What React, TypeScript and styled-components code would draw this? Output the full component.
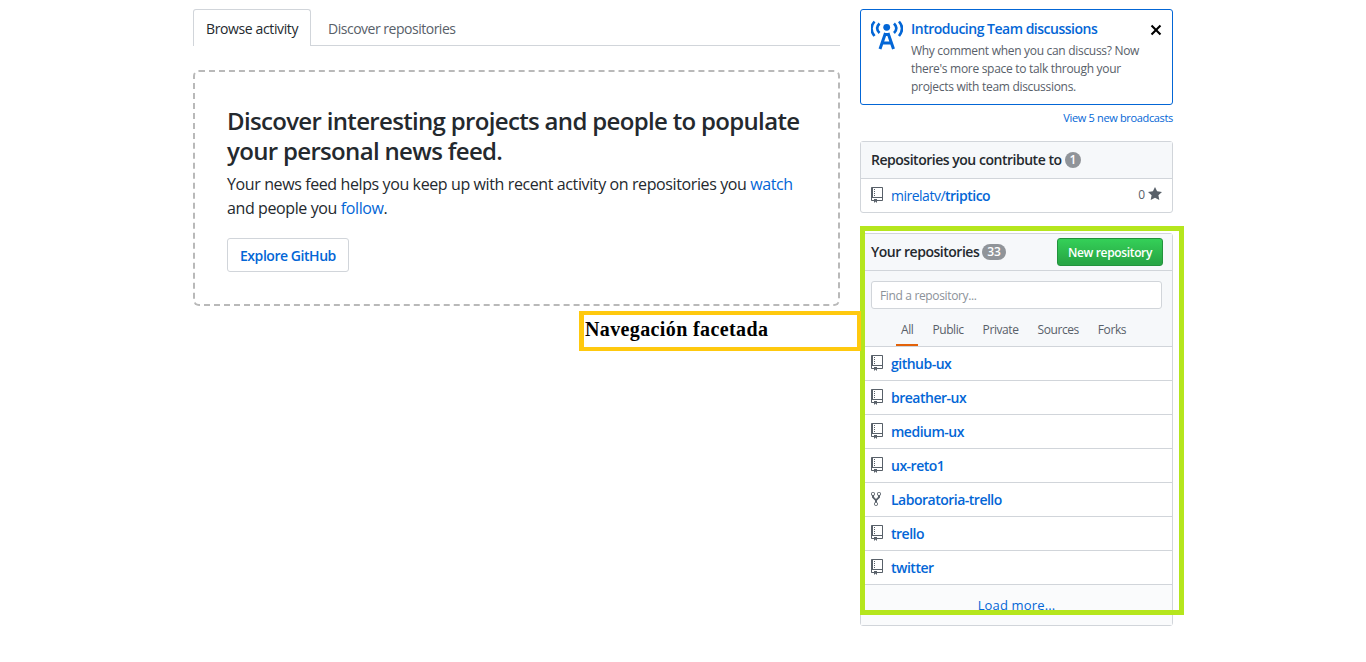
import React from "react";
import styled, { createGlobalStyle } from "styled-components";

const GlobalStyle = createGlobalStyle`
  html, body {
    margin: 0;
    padding: 0;
    background: #fff;
    font-family: "Open Sans", "Noto Sans", sans-serif;
    color: #24292e;
  }
  a {
    color: #0366d6;
    text-decoration: none;
  }
`;

//#region Styles
const Page = styled.div`
  position: relative;
  height: 662px;
  overflow: hidden;
`;

const Container = styled.div`
  width: 980px;
  margin: 0 auto;
  padding-top: 9px;
  display: grid;
  grid-template-columns: 647px 313px;
  column-gap: 20px;
  align-items: start;
`;

const TabBar = styled.div`
  display: flex;
  height: 36px;
  border-bottom: 1px solid #d1d5da;
  margin-bottom: 24px;
`;

const Tab = styled.a<{ $active?: boolean }>`
  box-sizing: border-box;
  height: 37px;
  display: flex;
  align-items: center;
  padding: 0 ${(p) => (p.$active ? "12px" : "16px")};
  font-size: 14px;
  letter-spacing: ${(p) => (p.$active ? "-0.38px" : "-0.49px")};
  color: ${(p) => (p.$active ? "#24292e" : "#586069")};
  background: ${(p) => (p.$active ? "#fff" : "transparent")};
  border: 1px solid ${(p) => (p.$active ? "#d1d5da" : "transparent")};
  border-bottom: 0;
  border-radius: 3px 3px 0 0;
`;

const Blankslate = styled.div`
  box-sizing: border-box;
  height: 236px;
  border: 2px dashed #b9b9b9;
  border-radius: 6px;
  padding: 34px 32px;
`;

const BlankTitle = styled.h2`
  margin: 0 0 6px;
  font-size: 24px;
  line-height: 30px;
  font-weight: 600;
  color: #24292e;
  letter-spacing: -0.67px;
`;

const BlankText = styled.p`
  margin: 0 0 18px;
  font-size: 16px;
  line-height: 24px;
  color: #24292e;
  letter-spacing: -0.39px;
`;

const ExploreButton = styled.a`
  box-sizing: border-box;
  display: inline-flex;
  align-items: center;
  height: 34px;
  padding: 0 12px;
  font-size: 14px;
  font-weight: 600;
  letter-spacing: -0.45px;
  border: 1px solid #d1d5da;
  border-radius: 3px;
`;

const Side = styled.div`
  display: flex;
  flex-direction: column;
`;

const Broadcast = styled.div`
  box-sizing: border-box;
  height: 96px;
  display: flex;
  gap: 8px;
  padding: 9px 10px;
  border: 1px solid #0366d6;
  border-radius: 3px;
  position: relative;
`;

const BroadcastBody = styled.div`
  flex: 1;
`;

const BroadcastTitle = styled.a`
  display: block;
  font-size: 14px;
  line-height: 20px;
  font-weight: 600;
  letter-spacing: -0.5px;
`;

const BroadcastText = styled.p`
  margin: 3px 0 0;
  font-size: 12px;
  line-height: 18px;
  color: #586069;
  letter-spacing: -0.3px;
  width: 240px;
`;

const BroadcastGlyph = styled.svg`
  flex: none;
  fill: none;
  stroke: #0366d6;
`;

const CloseIcon = styled.svg`
  position: absolute;
  top: 12px;
  right: 10px;
`;

const MoreLink = styled.a`
  align-self: flex-end;
  margin: 5px 0 15px;
  font-size: 11px;
  line-height: 16px;
  letter-spacing: -0.34px;
`;

const Card = styled.div<{ $gap?: boolean }>`
  border: 1px solid #d1d5da;
  border-radius: 3px;
  margin-bottom: ${(p) => (p.$gap ? "20px" : "0")};
`;

const CardHeader = styled.div<{ $height: number }>`
  box-sizing: border-box;
  height: ${(p) => p.$height}px;
  display: flex;
  align-items: center;
  justify-content: space-between;
  padding: 0 9px 0 10px;
  background: #f6f8fa;
  border-bottom: 1px solid #d1d5da;
`;

const CardTitle = styled.h3`
  margin: -1px 0 0;
  display: flex;
  align-items: center;
  gap: 3px;
  font-size: 14px;
  font-weight: 600;
  color: #24292e;
  letter-spacing: -0.48px;
`;

const Counter = styled.span`
  min-width: 6px;
  padding: 0 5px;
  height: 16px;
  display: inline-flex;
  align-items: center;
  justify-content: center;
  background: #909499;
  color: #fff;
  border-radius: 8px;
  font-size: 12px;
  font-weight: 600;
  letter-spacing: 0;
`;

const NewButton = styled.a`
  box-sizing: border-box;
  height: 28px;
  width: 106px;
  display: flex;
  align-items: center;
  justify-content: center;
  font-size: 12px;
  font-weight: 600;
  letter-spacing: -0.35px;
  color: #fff;
  background: linear-gradient(-180deg, #34d058, #28a745 90%);
  border: 1px solid #23923d;
  border-radius: 3px;
`;

const FilterPanel = styled.div`
  background: #f6f8fa;
  padding: 10px 10px 0;
  border-bottom: 1px solid #d1d5da;
`;

const FindInput = styled.input`
  box-sizing: border-box;
  display: block;
  width: 291px;
  height: 28px;
  padding: 1px 8px 0;
  font-family: inherit;
  font-size: 12px;
  letter-spacing: -0.35px;
  background: #fff;
  border: 1px solid #d1d5da;
  border-radius: 3px;
  &::placeholder {
    color: #8c9299;
    opacity: 1;
  }
`;

const FilterTabs = styled.div`
  display: flex;
  margin-top: 10px;
  padding-left: 25px;
`;

const FilterTab = styled.a<{ $active?: boolean }>`
  box-sizing: border-box;
  height: 27px;
  display: flex;
  align-items: center;
  padding: 0 5px 4px;
  margin-right: 9px;
  font-size: 12px;
  letter-spacing: -0.42px;
  color: #586069;
  border-bottom: 2px solid ${(p) => (p.$active ? "#e36209" : "transparent")};
`;

const RepoRow = styled.div<{ $height: number; $line?: boolean }>`
  box-sizing: border-box;
  height: ${(p) => p.$height}px;
  display: flex;
  align-items: center;
  gap: 8px;
  padding: 0 10px;
  border-bottom: ${(p) => (p.$line ? "1px solid #d1d5da" : "0")};
`;

const RepoIcon = styled.svg`
  flex: none;
  fill: #586069;
  margin-top: -1px;
`;

const RepoLink = styled.a`
  font-size: 14px;
  letter-spacing: -0.5px;
  font-weight: 600;
`;

const RepoOwner = styled.span`
  font-weight: 400;
`;

const Stars = styled.span`
  margin-left: auto;
  display: flex;
  align-items: center;
  gap: 3px;
  font-size: 12px;
  color: #586069;
  margin-top: -3px;
`;

const StarIcon = styled.svg`
  fill: #586069;
`;

const LoadMore = styled.a`
  display: block;
  box-sizing: border-box;
  height: 40px;
  padding-top: 10px;
  background: #fafbfc;
  text-align: center;
  font-size: 13px;
  line-height: 20px;
  letter-spacing: 0.15px;
`;

const Annotation = styled.div<{ $color: string; $w: number }>`
  position: absolute;
  box-sizing: border-box;
  border: ${(p) => p.$w}px solid ${(p) => p.$color};
`;

const GreenFrame = styled(Annotation)`
  left: 860px;
  top: 226px;
  width: 324px;
  height: 389px;
`;

const YellowLabel = styled(Annotation)`
  left: 579px;
  top: 311px;
  width: 282px;
  height: 40px;
  border-left-width: 5px;
  padding: 2px 0 0 1px;
  background: #fff;
  font-family: "Liberation Serif", serif;
  font-weight: 700;
  font-size: 20px;
  letter-spacing: 0.38px;
  line-height: 24px;
  color: #000;
`;
//#endregion

const TowerIcon = () => (
  <BroadcastGlyph width="32" height="32" viewBox="0 0 32 32">
    <circle cx="15.7" cy="8.3" r="3.4" fill="#0366d6" stroke="none" />
    <path d="M8.5 4.5C5.5 7.500 5.500 11 8.500 14M23 4.500C26 7.500 26 11 23 14" strokeWidth="2.600" />
    <path d="M3.500 2.500C-0.500 7 -0.500 12 3.500 17M28 2.500C32 7 32 12 28 17" strokeWidth="2.600" />
    <path d="M14.500 14L9 30M17 14L22.500 30M11.500 24H20M14 15.500H17.500" strokeWidth="3" />
  </BroadcastGlyph>
);

const BookIcon = () => (
  <RepoIcon width="12" height="16" viewBox="0 0 12 16">
    <path d="M4 9H3V8h1v1zm0-3H3v1h1V6zm0-2H3v1h1V4zm0-2H3v1h1V2zm8-1v12c0 .55-.45 1-1 1H6v2l-1.500-1.500L3 16v-2H1c-.55 0-1-.45-1-1V1c0-.55.45-1 1-1h10c.55 0 1 .45 1 1zm-1 10H1v2h2v-1h3v1h5v-2zm0-10H2v9h9V1z" />
  </RepoIcon>
);

const ForkIcon = () => (
  <RepoIcon width="12" height="16" viewBox="0 0 12 16">
    <path d="M8 1a1.993 1.993 0 0 0-1 3.720V6L5 8 3 6V4.720A1.993 1.993 0 0 0 2 1a1.993 1.993 0 0 0-1 3.720V6.500l3 3v1.780A1.993 1.993 0 0 0 5 15a1.993 1.993 0 0 0 1-3.720V9.500l3-3V4.720A1.993 1.993 0 0 0 8 1zM2 4.200C1.340 4.200.8 3.650.8 3c0-.65.55-1.200 1.200-1.200.65 0 1.200.55 1.200 1.200 0 .65-.55 1.200-1.200 1.200zm3 10c-.66 0-1.200-.55-1.200-1.200 0-.65.55-1.200 1.200-1.200.65 0 1.200.55 1.200 1.200 0 .65-.55 1.200-1.200 1.200zm3-10c-.66 0-1.200-.55-1.200-1.200 0-.65.55-1.200 1.200-1.200.65 0 1.200.55 1.200 1.200 0 .65-.55 1.200-1.200 1.200z" />
  </RepoIcon>
);

const repos = [
  { name: "github-ux" },
  { name: "breather-ux" },
  { name: "medium-ux" },
  { name: "ux-reto1" },
  { name: "Laboratoria-trello", fork: true },
  { name: "trello" },
  { name: "twitter" },
];

const filters = ["All", "Public", "Private", "Sources", "Forks"];

const App = () => {
  return (
    <Page>
      <GlobalStyle />
      <Container>
        <main>
          <TabBar>
            <Tab $active>Browse activity</Tab>
            <Tab>Discover repositories</Tab>
          </TabBar>
          <Blankslate>
            <BlankTitle>Discover interesting projects and people to populate your personal news feed.</BlankTitle>
            <BlankText>
              Your news feed helps you keep up with recent activity on repositories you <a>watch</a> and people you <a>follow</a>.
            </BlankText>
            <ExploreButton>Explore GitHub</ExploreButton>
          </Blankslate>
        </main>
        <Side>
          <Broadcast>
            <TowerIcon />
            <BroadcastBody>
              <BroadcastTitle>Introducing Team discussions</BroadcastTitle>
              <BroadcastText>Why comment when you can discuss? Now there's more space to talk through your projects with team discussions.</BroadcastText>
            </BroadcastBody>
            <CloseIcon width="12" height="16" viewBox="0 0 12 16">
              <path d="M7.480 8l3.750 3.750-1.480 1.480L6 9.480l-3.750 3.750-1.480-1.480L4.520 8 .77 4.250l1.480-1.480L6 6.520l3.750-3.750 1.480 1.480L7.480 8z" />
            </CloseIcon>
          </Broadcast>
          <MoreLink>View 5 new broadcasts</MoreLink>
          <Card $gap>
            <CardHeader $height={37}>
              <CardTitle>
                Repositories you contribute to <Counter>1</Counter>
              </CardTitle>
            </CardHeader>
            <RepoRow $height={33}>
              <BookIcon />
              <RepoLink>
                <RepoOwner>mirelatv/</RepoOwner>triptico
              </RepoLink>
              <Stars>
                0
                <StarIcon width="14" height="16" viewBox="0 0 14 16">
                  <path d="M14 6l-4.900-.64L7 1 4.900 5.360 0 6l3.600 3.260L2.670 14 7 11.670 11.330 14l-.93-4.740L14 6z" />
                </StarIcon>
              </Stars>
            </RepoRow>
          </Card>
          <Card>
            <CardHeader $height={37}>
              <CardTitle>
                Your repositories <Counter>33</Counter>
              </CardTitle>
              <NewButton>New repository</NewButton>
            </CardHeader>
            <FilterPanel>
              <FindInput placeholder="Find a repository..." />
              <FilterTabs>
                {filters.map((f, i) => (
                  <FilterTab key={f} $active={i === 0}>
                    {f}
                  </FilterTab>
                ))}
              </FilterTabs>
            </FilterPanel>
            {repos.map((r) => (
              <RepoRow key={r.name} $height={34} $line>
                {r.fork ? <ForkIcon /> : <BookIcon />}
                <RepoLink>{r.name}</RepoLink>
              </RepoRow>
            ))}
            <LoadMore>Load more...</LoadMore>
          </Card>
        </Side>
      </Container>
      <GreenFrame $color="#b5e61d" $w={5} />
      <YellowLabel $color="#ffc90e" $w={4}>Navegación facetada</YellowLabel>
    </Page>
  );
};

export default App;
